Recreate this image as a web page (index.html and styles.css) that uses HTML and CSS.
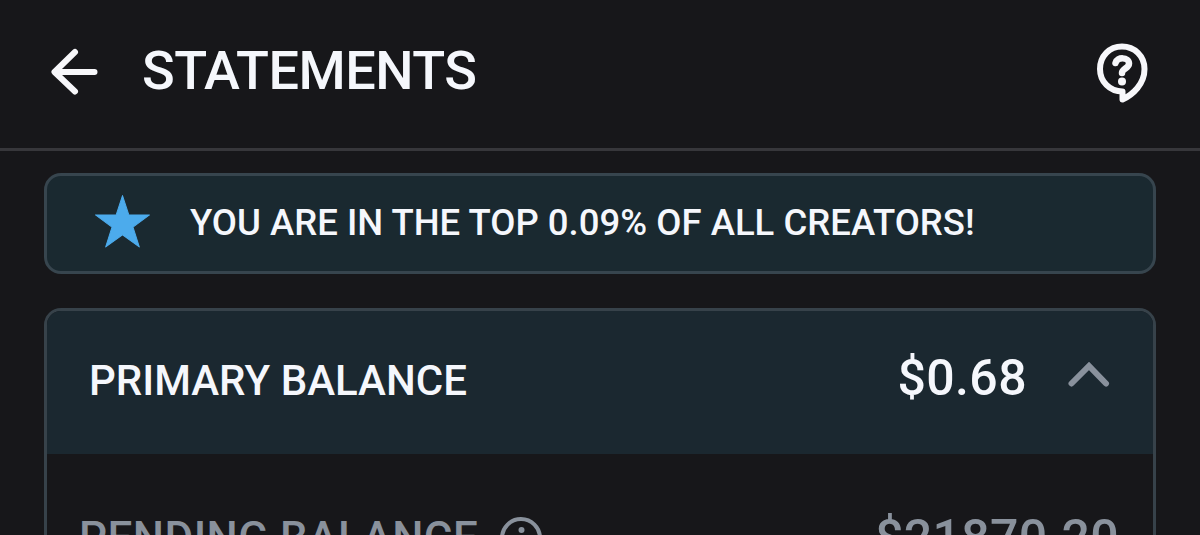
FILE: index.html
```html
<!DOCTYPE html>
<html lang="en">

<head>
  <meta charset="UTF-8">
  <meta name="viewport" content="width=device-width, initial-scale=1.0">
  <title>Statements</title>
  <link rel="stylesheet" href="styles.css">
</head>

<body>
  <header class="header">
    <svg class="back-icon" viewBox="0 0 50 50">
      <path d="M26 5 L5.500 25 L26 44.500 M6 25 H45.500" />
    </svg>
    <h1 class="title">STATEMENTS</h1>
    <!-- Help bubble -->
    <svg class="help-icon" viewBox="0 0 52 62">
      <path d="M26.500 49.500 V57.500 C37 52.500 48.500 42 48.500 27 C48.500 14 38.500 4.500 26 4.500 C13.500 4.500 4 14 4 27 C4 39.500 13.500 49.500 26.500 49.500 Z" />
      <path class="question" d="M19.500 21 C21 14.500 33 15 33 21.500 C33 26.500 26 26.500 26 31" />
      <circle cx="26" cy="39.500" r="4" />
    </svg>
  </header>

  <main class="content">
    <div class="banner">
      <svg class="star-icon" viewBox="0 0 56 54">
        <path d="M28 1.500 L34.200 20.500 H54.500 L38.300 32.500 L44.500 52 L28 40 L11.500 52 L17.700 32.500 L1.500 20.500 H21.800 Z" />
      </svg>
      <span class="banner-text">YOU ARE IN THE TOP 0.09% OF ALL CREATORS!</span>
    </div>

    <section class="card">
      <div class="card-head">
        <h2 class="card-title">PRIMARY BALANCE</h2>
        <span class="amount">$0.68</span>
        <svg class="chevron-icon" viewBox="0 0 42 26">
          <path d="M3.500 21.500 L21 4 L38 21.500" />
        </svg>
      </div>
      <div class="card-row">
        <span class="row-label">PENDING BALANCE</span>
        <svg class="info-icon" viewBox="0 0 42 42">
          <circle class="ring" cx="21" cy="21" r="19" />
          <circle cx="21.500" cy="13" r="3" />
          <path d="M21 20 V31" />
        </svg>
        <span class="row-amount">$21870.20</span>
      </div>
    </section>
  </main>
</body>

</html>
```
FILE: styles.css
```css
* {
  box-sizing: border-box;
}

body {
  margin: 0;
  height: 535px;
  overflow: hidden;
  background-color: #17171a;
  color: #f5f7fc;
  font-family: Roboto, "Liberation Sans", sans-serif;
  font-weight: 500;
}

h1,
h2 {
  margin: 0;
  font-weight: 500;
}

svg {
  flex: none;
  display: block;
}

/* Top bar */
.header {
  display: flex;
  align-items: center;
  height: 151px;
  padding: 0 52px 7px 49px;
  border-bottom: 3px solid #37373b;
}

.back-icon {
  width: 50px;
  height: 50px;
  margin-top: 3px;
  fill: none;
  stroke: #f7f7fa;
  stroke-width: 6;
  stroke-linecap: round;
  stroke-linejoin: round;
}

.title {
  margin-left: 43px;
  font-size: 54px;
  line-height: 64px;
  letter-spacing: -0.5px;
}

.help-icon {
  width: 52px;
  height: 62px;
  margin-left: auto;
  margin-top: 5px;
  fill: #f7f7fa;
}

.help-icon path {
  fill: none;
  stroke: #f7f7fa;
  stroke-width: 6;
  stroke-linecap: round;
  stroke-linejoin: round;
}

.help-icon .question {
  stroke-width: 6.500;
}

.content {
  padding: 22px 44px 0;
}

/* Ranking banner */
.banner {
  display: flex;
  align-items: center;
  height: 101px;
  padding: 0 47px 2px;
  border: 3px solid #37454e;
  border-radius: 17px;
  background-color: #1a2930;
}

.star-icon {
  width: 57px;
  height: 55px;
  margin-bottom: 3px;
  fill: #4cabec;
  stroke: #4cabec;
  stroke-width: 1;
  stroke-linejoin: round;
}

.banner-text {
  margin-left: 39px;
  font-size: 36.500px;
  line-height: 44px;
  letter-spacing: 0.02px;
  white-space: nowrap;
}

/* Balance card */
.card {
  margin-top: 34px;
  height: 400px;
  border: 3px solid #37424a;
  border-radius: 17px;
  overflow: hidden;
}

.card-head {
  display: flex;
  align-items: center;
  height: 143px;
  padding: 0 43px 4px 42px;
  background-color: #1b2830;
}

.card-title {
  font-size: 42px;
  line-height: 50px;
}

.amount {
  margin-left: auto;
  margin-bottom: 6px;
  font-size: 50px;
  line-height: 60px;
  letter-spacing: 0.4px;
}

.chevron-icon {
  width: 42px;
  height: 26px;
  margin-left: 41px;
  margin-bottom: 12px;
  fill: none;
  stroke: #89919c;
  stroke-width: 6;
  stroke-linecap: round;
}

.card-row {
  display: flex;
  align-items: center;
  padding: 54px 34px 0 32px;
  color: #89919c;
}

.row-label {
  font-size: 44px;
  line-height: 60px;
  letter-spacing: 0.45px;
}

.info-icon {
  width: 42px;
  height: 42px;
  margin-left: 22px;
  fill: #89919c;
}

.info-icon .ring,
.info-icon path {
  fill: none;
  stroke: #89919c;
  stroke-width: 4;
}

.row-amount {
  margin-left: auto;
  font-size: 50px;
  line-height: 60px;
  letter-spacing: 0.3px;
}
```
